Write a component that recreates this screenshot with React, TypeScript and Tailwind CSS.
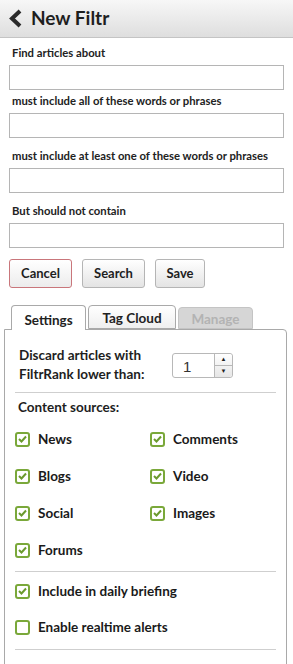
import React from "react";

const Check: React.FC<{ on?: boolean }> = ({ on = true }) => (
  <span className="flex h-[15px] w-[15px] shrink-0 items-center justify-center rounded-[3px] border-2 border-[#7aa83a] bg-white">
    {on && (
      <svg width="9" height="8" viewBox="0 0 9 8">
        <path d="M1 4 L3.5 6.5 L8 1.5" fill="none" stroke="#6b9a2e" strokeWidth="2" />
      </svg>
    )}
  </span>
);

const Field: React.FC<{ label: string }> = ({ label }) => (
  <div className="flex flex-col">
    <label className="pl-[3px] text-[11.3px] font-bold leading-[14px] text-[#222]">{label}</label>
    <div className="mt-[5px] h-[25px] border border-[#b5b5b5] bg-white" />
  </div>
);

const Item: React.FC<{ label: string; on?: boolean }> = ({ label, on = true }) => (
  <div className="flex h-[20px] items-center gap-[8px]">
    <Check on={on} />
    <span className="text-[13.5px] font-bold text-[#1a1a1a]">{label}</span>
  </div>
);

const App: React.FC = () => {
  return (
    <div className="h-[664px] w-[293px] overflow-hidden bg-white font-['Lato','Liberation_Sans',sans-serif]">
      <header className="flex h-[38px] items-center gap-[8px] border-b border-[#c4c4c4] bg-linear-to-b from-[#f7f7f7] to-[#dedede] pl-[8px]">
        <svg width="15" height="19" viewBox="0 0 15 19">
          <path d="M12 2 L4 9.5 L12 17" fill="none" stroke="#2a2a2a" strokeWidth="4" />
        </svg>
        <h1 className="text-[19px] font-bold text-[#1e1e1e]">New Filtr</h1>
      </header>

      <div className="px-[9px] pt-[8px]">
        <Field label="Find articles about" />
        <div className="mt-[4px] flex flex-col gap-[11px]">
          <Field label="must include all of these words or phrases" />
          <Field label="must include at least one of these words or phrases" />
          <Field label="But should not contain" />
        </div>
      </div>

      <div className="mt-[11px] flex gap-[10px] px-[9px]">
        <button className="h-[29px] w-[63px] rounded-[3px] border border-[#c9767b] bg-linear-to-b from-white to-[#ececec] text-[13px] font-bold text-[#1e1e1e]">
          Cancel
        </button>
        <button className="h-[29px] w-[63px] rounded-[3px] border border-[#b5b5b5] bg-linear-to-b from-white to-[#e4e4e4] text-[13px] font-bold text-[#1e1e1e]">
          Search
        </button>
        <button className="h-[29px] w-[50px] rounded-[3px] border border-[#b5b5b5] bg-linear-to-b from-white to-[#e4e4e4] text-[13px] font-bold text-[#1e1e1e]">
          Save
        </button>
      </div>

      <div className="mt-[17px] pl-[4px] pr-[6px]">
        <div className="flex items-end gap-[2px] pl-[7px]">
          <div className="relative -mb-px h-[25px] w-[75px] rounded-t-[4px] border border-b-0 border-[#a9a9a9] bg-white pt-[4px] text-center text-[13.5px] font-bold text-[#222]">
            Settings
          </div>
          <div className="h-[24px] w-[88px] rounded-t-[4px] border border-[#a9a9a9] bg-linear-to-b from-white to-[#efefef] pt-[2px] text-center text-[13.5px] font-bold text-[#222]">
            Tag Cloud
          </div>
          <div className="h-[22px] w-[75px] rounded-t-[4px] border border-[#c4c4c4] bg-[#d6d6d6] pt-[1px] text-center text-[13.5px] font-bold text-[#b3b3b3]">
            Manage
          </div>
        </div>
        <div className="h-[340px] rounded-tr-[4px] border border-[#a9a9a9] px-[10px] pt-[16px]">
          <div className="flex items-center justify-between pl-[4px] pr-[43px]">
            <p className="text-[13.5px] font-bold leading-[19px] text-[#1e1e1e]">
              Discard articles with
              <br />
              FiltrRank lower than:
            </p>
            <div className="flex h-[25px] w-[61px] rounded-[3px] border border-[#b8b8b8] bg-white">
              <span className="flex-1 pl-[10px] pt-[2px] font-['Liberation_Sans',sans-serif] text-[15px] text-[#333]">1</span>
              <div className="flex w-[18px] flex-col overflow-hidden rounded-r-[3px] border-l border-[#b8b8b8] bg-linear-to-b from-white to-[#e6e6e6]">
                <span className="flex flex-1 items-center justify-center border-b border-[#b8b8b8] text-[6px] leading-none text-[#222]">▲</span>
                <span className="flex flex-1 items-center justify-center text-[6px] leading-none text-[#222]">▼</span>
              </div>
            </div>
          </div>
          <div className="mt-[8px] h-px bg-[#cfcfcf]" />
          <p className="mt-[5px] pl-[3px] text-[13.5px] font-bold leading-[19px] text-[#1e1e1e]">Content sources:</p>
          <div className="mt-[12px] grid grid-cols-[135px_1fr] gap-y-[17px]">
            <Item label="News" />
            <Item label="Comments" />
            <Item label="Blogs" />
            <Item label="Video" />
            <Item label="Social" />
            <Item label="Images" />
            <Item label="Forums" />
          </div>
          <div className="mt-[11px] h-px bg-[#cfcfcf]" />
          <div className="mt-[9px] flex flex-col gap-[16px]">
            <Item label="Include in daily briefing" />
            <Item label="Enable realtime alerts" on={false} />
          </div>
          <div className="mt-[12px] h-px bg-[#cfcfcf]" />
        </div>
      </div>
    </div>
  );
};

export default App;
